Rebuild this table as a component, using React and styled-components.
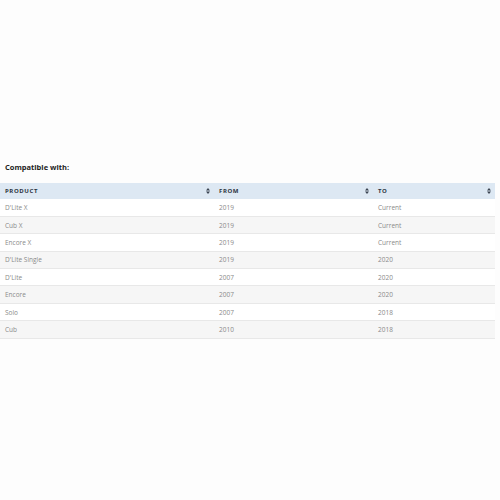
import styled, { createGlobalStyle } from "styled-components";

const GlobalStyle = createGlobalStyle`
  html, body {
    margin: 0;
    padding: 0;
    background: #fdfdfd;
    font-family: "Open Sans", "Liberation Sans", sans-serif;
  }
`;

const Page = styled.div`
  width: 500px;
  height: 500px;
  padding-top: 162px;
  box-sizing: border-box;
`;

const Title = styled.h4`
  margin: 0 0 11px 5px;
  font-size: 7.5px;
  font-weight: 700;
  color: #222;
  line-height: 10px;
`;

const Table = styled.table`
  width: 495px;
  border-collapse: collapse;
  table-layout: fixed;
`;

const Th = styled.th`
  box-sizing: border-box;
  width: ${(p) => p.$w}px;
  height: 16px;
  padding: 0 4px 0 5px;
  background: #dde8f3;
  text-align: left;
  font-size: 6px;
  font-weight: 700;
  letter-spacing: 0.6px;
  text-transform: uppercase;
  color: #2b3440;
`;

const HeadInner = styled.div`
  display: flex;
  align-items: center;
  justify-content: space-between;
`;

const SortIcon = styled.svg`
  width: 4px;
  height: 6px;
  fill: #3a4350;
`;

const Row = styled.tr`
  background: ${(p) => (p.$alt ? "#f6f6f6" : "#ffffff")};
  border-bottom: 1px solid #e8e8e8;
`;

const Td = styled.td`
  box-sizing: border-box;
  height: 17.4px;
  padding: 0 5px;
  font-size: 6.5px;
  color: #8a8a8a;
`;

const rows = [
  ["D'Lite X", "2019", "Current"],
  ["Cub X", "2019", "Current"],
  ["Encore X", "2019", "Current"],
  ["D'Lite Single", "2019", "2020"],
  ["D'Lite", "2007", "2020"],
  ["Encore", "2007", "2020"],
  ["Solo", "2007", "2018"],
  ["Cub", "2010", "2018"],
];

const Sort = () => (
  <SortIcon viewBox="0 0 4 6">
    <path d="M2 0 L4 2.4 H0 Z M2 6 L4 3.6 H0 Z" />
  </SortIcon>
);

export default function App() {
  return (
    <Page>
      <GlobalStyle />
      <Title>Compatible with:</Title>
      <Table>
        <thead>
          <tr>
            <Th $w={214}>
              <HeadInner>
                Product <Sort />
              </HeadInner>
            </Th>
            <Th $w={159}>
              <HeadInner>
                From <Sort />
              </HeadInner>
            </Th>
            <Th $w={122}>
              <HeadInner>
                To <Sort />
              </HeadInner>
            </Th>
          </tr>
        </thead>
        <tbody>
          {rows.map((r, i) => (
            <Row key={r[0]} $alt={i % 2 === 1}>
              <Td>{r[0]}</Td>
              <Td>{r[1]}</Td>
              <Td>{r[2]}</Td>
            </Row>
          ))}
        </tbody>
      </Table>
    </Page>
  );
}
